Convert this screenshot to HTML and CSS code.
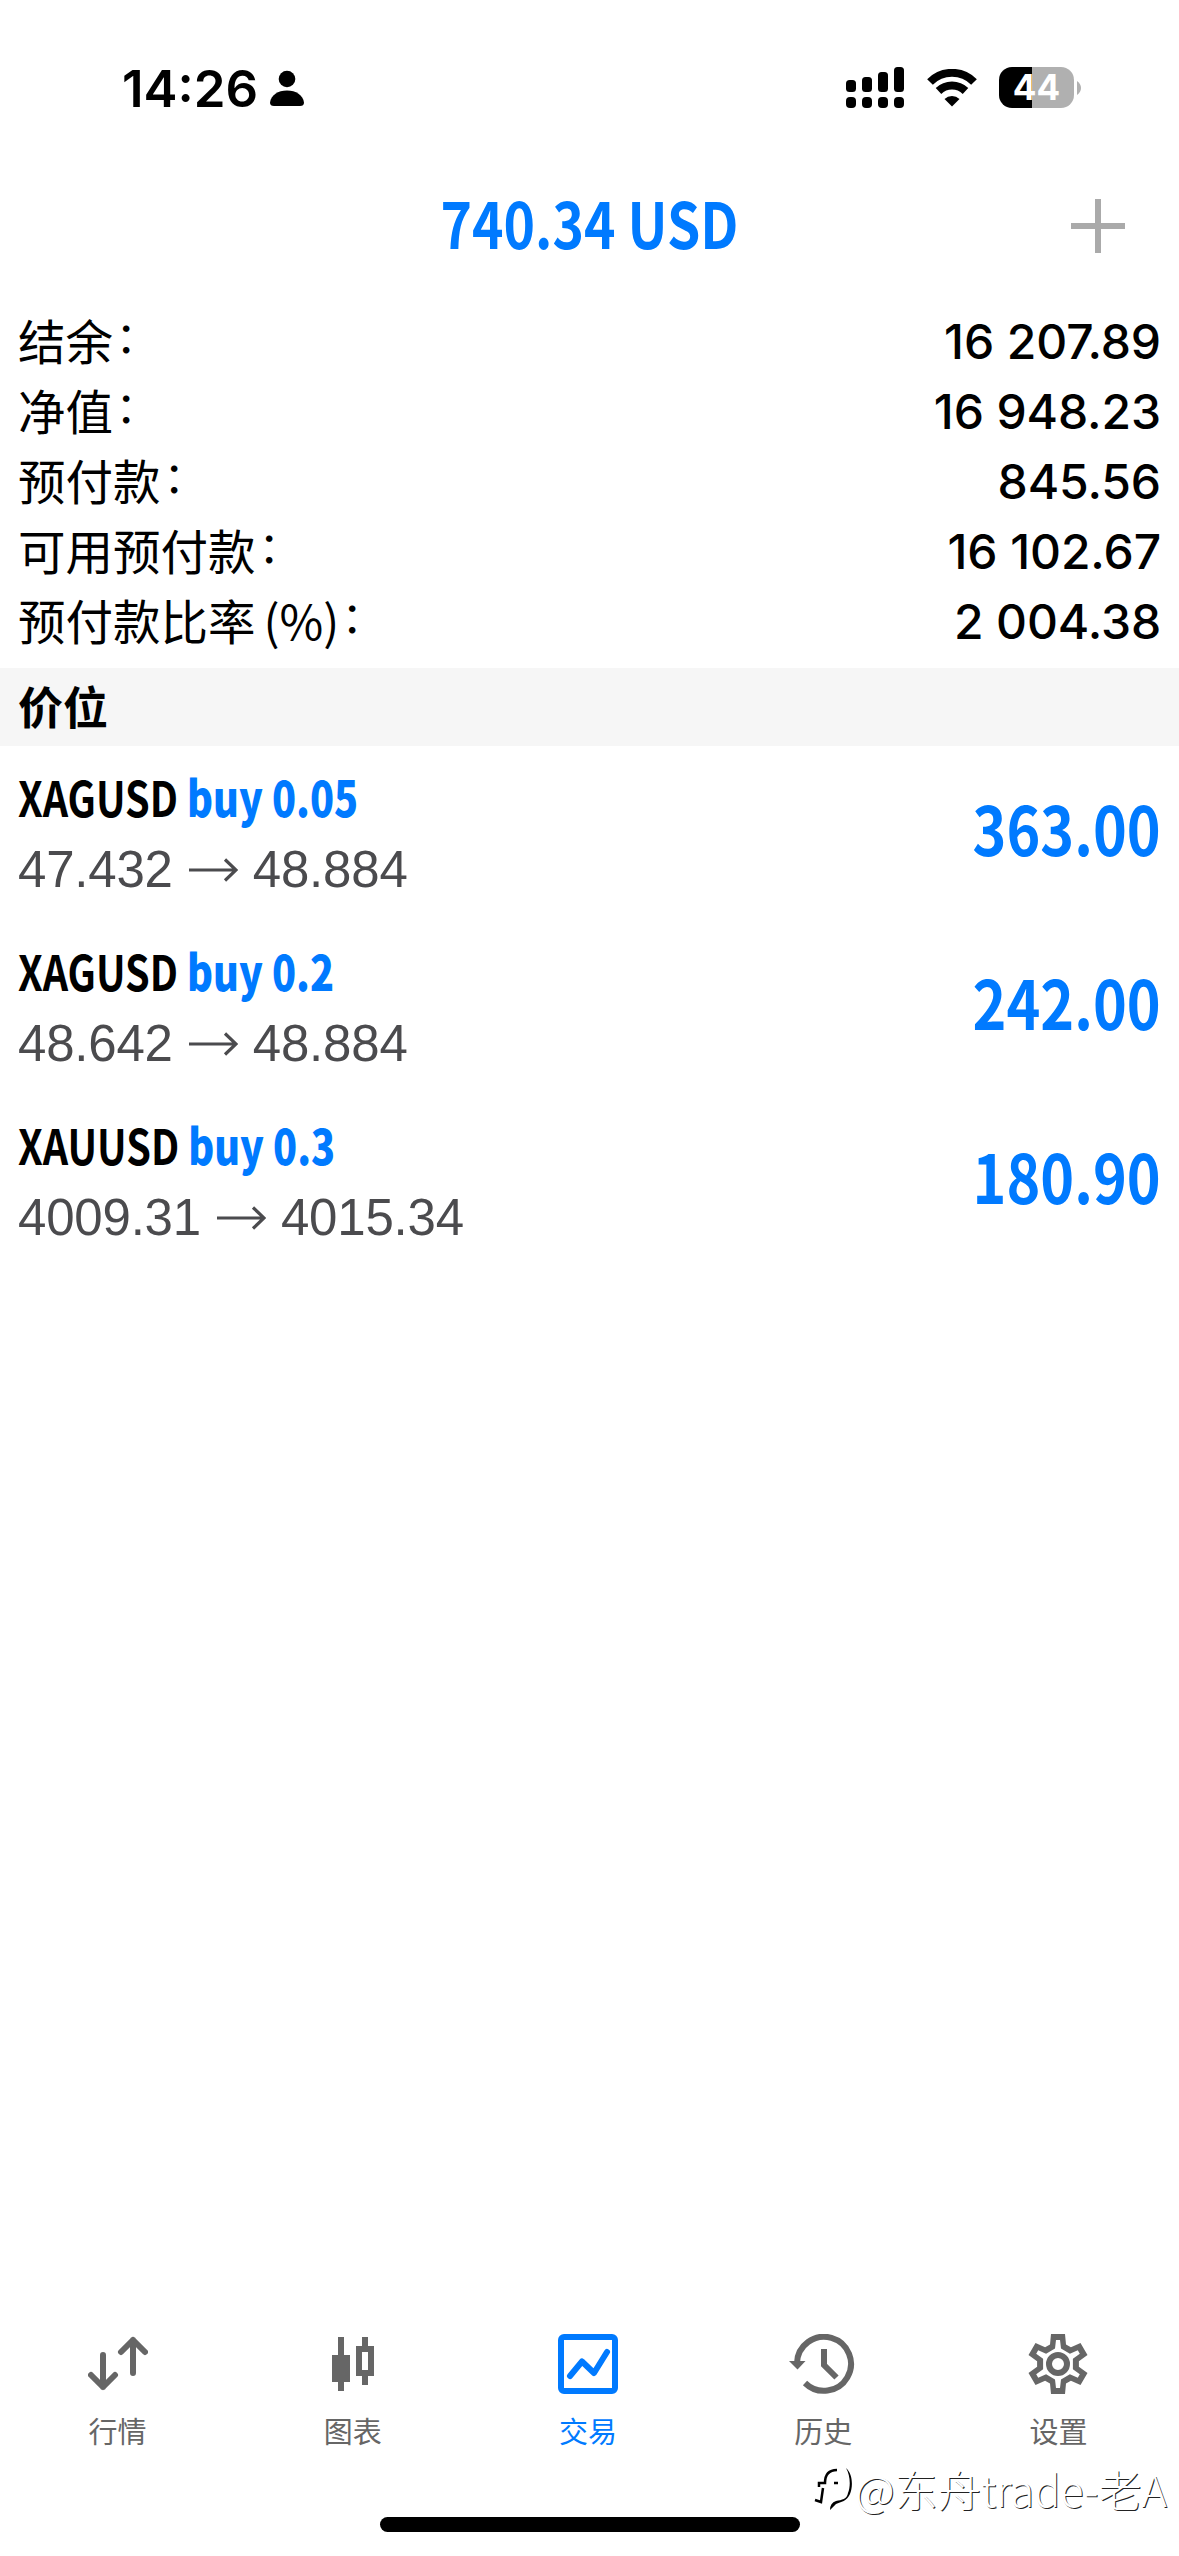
FILE: index.html
```html
<!DOCTYPE html>
<html lang="zh-CN">
<head>
<meta charset="utf-8">
<title>交易</title>
<link rel="stylesheet" href="styles.css">
</head>
<body>
<div class="app">
  <div class="status">
    <div class="clock"><span>14:26</span>
      <svg width="34" height="36" viewBox="0 0 34 36"><circle cx="17" cy="9" r="8.300"/><path d="M4 36Q0 36 0 32.500C1 25 8 20.500 17 20.500S33 25 34 32.500Q34 36 30 36Z"/></svg>
    </div>
    <div class="indicators">
      <svg class="signal" width="58" height="41" viewBox="0 0 58 41"><rect y="13" width="10" height="12" rx="3.500"/><rect x="16" y="10" width="10" height="15" rx="3.500"/><rect x="32" y="5" width="10" height="20" rx="3.500"/><rect x="48" width="10" height="25" rx="3.500"/><rect y="30" width="10" height="11" rx="4"/><rect x="16" y="30" width="10" height="11" rx="4"/><rect x="32" y="30" width="10" height="11" rx="4"/><rect x="48" y="30" width="10" height="11" rx="4"/></svg>
      <svg class="wifi" width="50" height="38" viewBox="0 0 50 38"><path class="arc" d="M3 13A31 31 0 0 1 47 13M11.500 22A19.500 19.500 0 0 1 38.500 22"/><path d="M25 37.500 17.500 30A11 11 0 0 1 32.500 30Z"/></svg>
      <div class="battery"><span class="level">44</span><svg width="4" height="14" viewBox="0 0 4 14"><path d="M0 0Q4 3 4 7T0 14Z"/></svg></div>
    </div>
  </div>
  <header class="top"><h1><span class="cond">740.34 USD</span></h1>
    <svg class="plus" width="54" height="54" viewBox="0 0 54 54"><path d="M27 0V54M0 27H54"/></svg>
  </header>
  <dl class="account">
    <div class="line"><dt>结余<span class="colon">：</span></dt><dd>16 207.89</dd></div>
    <div class="line"><dt>净值<span class="colon">：</span></dt><dd>16 948.23</dd></div>
    <div class="line"><dt>预付款<span class="colon">：</span></dt><dd>845.56</dd></div>
    <div class="line"><dt>可用预付款<span class="colon">：</span></dt><dd>16 102.67</dd></div>
    <div class="line"><dt>预付款比率<span class="unit">(%)</span><span class="colon">：</span></dt><dd>2 004.38</dd></div>
  </dl>
  <h2 class="section">价位</h2>
  <main class="positions">
    <article class="position"><div><p class="deal"><span class="cond">XAGUSD <b>buy 0.05</b></span></p><p class="prices"><span>47.432</span><svg width="49" height="24" viewBox="0 0 49 24"><path d="M0 12H47M36 1.500 47 12 36 22.500"/></svg><span>48.884</span></p></div><p class="profit"><span class="cond">363.00</span></p></article>
    <article class="position"><div><p class="deal"><span class="cond">XAGUSD <b>buy 0.2</b></span></p><p class="prices"><span>48.642</span><svg width="49" height="24" viewBox="0 0 49 24"><path d="M0 12H47M36 1.500 47 12 36 22.500"/></svg><span>48.884</span></p></div><p class="profit"><span class="cond">242.00</span></p></article>
    <article class="position"><div><p class="deal"><span class="cond">XAUUSD <b>buy 0.3</b></span></p><p class="prices"><span>4009.31</span><svg width="49" height="24" viewBox="0 0 49 24"><path d="M0 12H47M36 1.500 47 12 36 22.500"/></svg><span>4015.34</span></p></div><p class="profit"><span class="cond">180.90</span></p></article>
  </main>
  <nav class="tabs">
    <a class="tab"><svg width="60" height="60" viewBox="0 0 60 60"><path class="round" d="M15 21V53M3 41 15 53 27 41M45 39V6M33 18 45 6 57 18"/></svg><span>行情</span></a>
    <a class="tab"><svg width="60" height="60" viewBox="0 0 60 60"><path class="solid" d="M15 3h6v18h6v27h-6v9h-6v-9H9V21h6z"/><path class="solid" fill-rule="evenodd" d="M39 3h6v9h6v30h-6v9h-6v-9h-6V12h6zM39 18v18h6V18z"/></svg><span>图表</span></a>
    <a class="tab active"><svg width="60" height="60" viewBox="0 0 60 60"><rect x="3" y="3" width="54" height="54" rx="3"/><path class="round" d="M12 42 24 27.500 36 39 49 18"/></svg><span>交易</span></a>
    <a class="tab"><svg width="70" height="60" viewBox="0 0 70 60"><path d="M9 29A27 27 0 1 1 17 49M36 15V31L48.500 43.500"/><path class="solid" d="M1 27H17.500L9.500 35.500Z"/></svg><span>历史</span></a>
    <a class="tab"><svg width="60" height="60" viewBox="-30 -30 60 60"><path class="solid" fill-rule="evenodd" d="M-8-19.500-7-30H7L8-19.500 12.900-16.700 22.500-21.100 29.500-8.900 20.900-2.800V2.800L29.500 8.900 22.500 21.100 12.900 16.700 8 19.500 7 30H-7L-8 19.500-12.900 16.700-22.500 21.100-29.500 8.900-20.900 2.800V-2.800L-29.500-8.900-22.500-21.100-12.900-16.700ZM-3-15.500-2-24H2L3-15.500 11.900-10.300 19.800-13.700 21.800-10.300 14.900-5.200V5.200L21.800 10.300 19.800 13.700 11.900 10.300 3 15.500 2 24H-2L-3 15.500-11.900 10.300-19.800 13.700-21.800 10.300-14.900 5.200V-5.200L-21.800-10.300-19.800-13.700-11.900-10.300Z"/><circle r="9"/></svg><span>设置</span></a>
  </nav>
  <div class="home"></div>
  <div class="watermark"><svg width="38" height="46" viewBox="0 0 38 46"><path class="edge" d="M23 5C15 5 11 9 11 18H5V22M9 23 7 37 1 35M20 18h4"/><path d="M32 3C39 9 39 22 36 29 33 36 27 37 22 39L16 45Q16 38 22 36C28 35 33 34 34 28 37 20 36 10 32 3Z"/></svg><span>@东舟trade-老A</span></div>
</div>
</body>
</html>
```
FILE: styles.css
```css
* { box-sizing: border-box; margin: 0; padding: 0; }
body { background: #fff; color: #000; font-family: Inter, "Noto Sans CJK SC", sans-serif; }
svg { display: block; flex: none; }
.app { position: relative; display: flex; flex-direction: column; width: 1179px; height: 2556px; overflow: hidden; background: #fff; }
.status { display: flex; justify-content: space-between; height: 171px; padding: 67px 98px 0 122px; }
.clock { display: flex; gap: 12px; height: 43px; align-items: center; font-size: 51px; font-weight: 600; line-height: 43px; }
.clock svg { margin-top: -1px; }
.indicators { display: flex; height: 41px; }
.signal { margin-right: 1px; }
.wifi { margin: 2px 22px 0; }
.arc { fill: none; stroke: #000; stroke-width: 8; }
.battery { display: flex; align-items: center; gap: 3px; }
.battery path { fill: #b0b0b0; }
.level { width: 75px; height: 41px; border-radius: 13px; background: linear-gradient(90deg, #000 33px, #b0b0b0 33px); color: #fff; font-size: 35px; font-weight: 700; line-height: 41px; text-align: center; }
.top { display: grid; grid-template-columns: 1fr auto 1fr; align-items: center; height: 100px; padding: 0 54px; }
.top h1 { grid-column: 2; color: #007aff; font-size: 64px; line-height: 100px; }
.top .cond { transform: scaleX(.835); }
.plus { justify-self: end; margin-top: 5px; }
.plus path { stroke: #aaa; stroke-width: 6; }
.cond { display: inline-block; font-family: "Noto Sans CJK SC", sans-serif; font-weight: 700; white-space: pre; }
.account { height: 397px; padding: 36px 18px 0 18px; }
.line { display: flex; justify-content: space-between; height: 70px; line-height: 70px; }
.line dt { margin-top: -2px; font-family: "Noto Sans CJK SC", sans-serif; font-size: 47.500px; }
.line dd { font-size: 48px; font-weight: 500; letter-spacing: -.1px; }
.unit { margin-left: 8px; }
.colon { display: inline-block; transform: translate(0, -5px) scale(.9); }
.section { height: 78px; padding-left: 18px; background: #f6f6f6; font-family: "Noto Sans CJK SC", sans-serif; font-size: 45px; font-weight: 700; line-height: 76px; }
.positions { flex: 1; }
.position { display: flex; justify-content: space-between; align-items: center; height: 174px; padding: 0 18px; }
.deal { height: 73px; font-size: 49px; line-height: 72px; }
.deal .cond { transform: scaleX(.808); transform-origin: left; }
.deal b { color: #007aff; }
.prices { display: flex; align-items: center; height: 73px; color: #4b4b4e; font-family: "Liberation Sans", Arial, sans-serif; font-size: 51px; line-height: 74px; letter-spacing: -.2px; }
.prices svg { margin: 0 15px 0 16px; fill: none; stroke: currentColor; stroke-width: 3.200; }
.profit { color: #007aff; font-size: 68px; line-height: 80px; padding-bottom: 8px; }
.profit .cond { transform: scaleX(.845); transform-origin: right; }
.tabs { display: flex; height: 183px; padding-right: 3px; }
.tab { display: flex; flex: 1; flex-direction: column; align-items: center; gap: 14px; color: #666; font-family: "Noto Sans CJK SC", sans-serif; font-size: 29px; line-height: 44px; }
.tab svg { fill: none; stroke: currentColor; stroke-width: 6; }
.tab .round { stroke-linecap: round; stroke-linejoin: round; }
.tab .solid { fill: currentColor; stroke: none; }
.active { color: #007aff; }
.home { align-self: center; width: 420px; height: 15px; margin-bottom: 24px; border-radius: 8px; background: #000; }
.watermark { position: absolute; right: 12px; bottom: 39px; display: flex; align-items: center; gap: 3px; color: #fff; font-family: "Noto Sans CJK SC", sans-serif; font-size: 43.200px; font-weight: 300; line-height: 58px; text-shadow: 1px 1px 0 #222; white-space: nowrap; }
.watermark .edge { fill: none; stroke: #000; stroke-width: 2.500; }
```
